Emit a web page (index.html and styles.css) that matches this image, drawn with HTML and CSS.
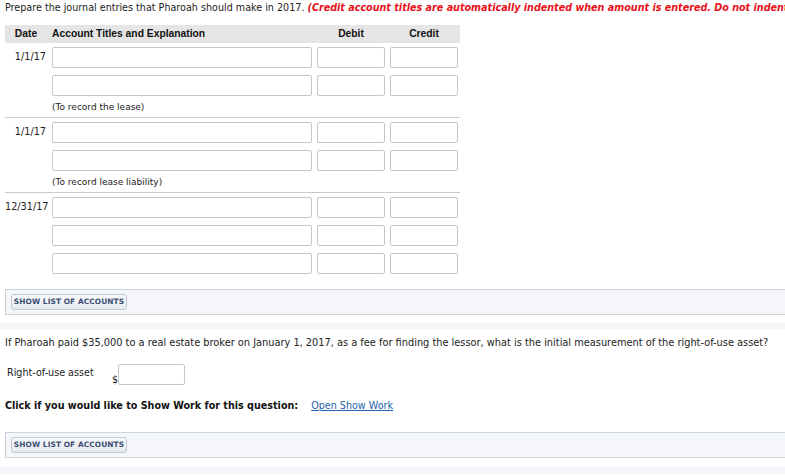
FILE: index.html
```html
<!DOCTYPE html>
<html>
<head>
<meta charset="utf-8">
<link rel="stylesheet" href="styles.css">
</head>
<body>
<div class="page">
  <p class="prompt">Prepare the journal entries that Pharoah should make in 2017. <span class="warn">(Credit account titles are automatically indented when amount is entered. Do not indent manually.)</span></p>

  <div class="journal">
    <div class="jhead">
      <div class="hc center">Date</div>
      <div class="hc">Account Titles and Explanation</div>
      <div class="hc center">Debit</div>
      <div class="hc center">Credit</div>
    </div>

    <div class="entry sep">
      <div class="row"><div class="date">1/1/17</div><input class="inp acct"><input class="inp amt"><input class="inp amt"></div>
      <div class="row"><div class="date"></div><input class="inp acct"><input class="inp amt"><input class="inp amt"></div>
      <div class="note">(To record the lease)</div>
    </div>

    <div class="entry sep">
      <div class="row"><div class="date">1/1/17</div><input class="inp acct"><input class="inp amt"><input class="inp amt"></div>
      <div class="row"><div class="date"></div><input class="inp acct"><input class="inp amt"><input class="inp amt"></div>
      <div class="note">(To record lease liability)</div>
    </div>

    <div class="entry">
      <div class="row"><div class="date">12/31/17</div><input class="inp acct"><input class="inp amt"><input class="inp amt"></div>
      <div class="row"><div class="date"></div><input class="inp acct"><input class="inp amt"><input class="inp amt"></div>
      <div class="row"><div class="date"></div><input class="inp acct"><input class="inp amt"><input class="inp amt"></div>
    </div>
  </div>

  <div class="acctbox first"><button class="btn">SHOW LIST OF ACCOUNTS</button></div>

  <div class="strip"></div>

  <p class="question">If Pharoah paid $35,000 to a real estate broker on January 1, 2017, as a fee for finding the lessor, what is the initial measurement of the right-of-use asset?</p>

  <div class="answer">
    <span class="label">Right-of-use asset</span>
    <span class="dollar">$</span><input class="inp ans">
  </div>

  <p class="showwork"><b>Click if you would like to Show Work for this question:</b><a class="link" href="#">Open Show Work</a></p>

  <div class="acctbox"><button class="btn">SHOW LIST OF ACCOUNTS</button></div>

  <div class="strip bottom"></div>
</div>
</body>
</html>
```

FILE: styles.css
```css
html, body {
  margin: 0;
  padding: 0;
  background: #fff;
  overflow: hidden;
}
.page {
  width: 785px;
  height: 475px;
  overflow: hidden;
  font-family: "DejaVu Sans", Verdana, sans-serif;
  font-size: 10px;
  color: #222;
  white-space: nowrap;
}
.prompt {
  margin: 0;
  padding: 1px 5px 0 5px;
  height: 24px;
  line-height: 14px;
  font-size: 9.6px;
}
.warn {
  color: #e8101a;
  font-weight: bold;
  font-style: italic;
}
.journal {
  margin-left: 5px;
  width: 455px;
  font-size: 10px;
}
.jhead, .row {
  display: grid;
  grid-template-columns: 42px 260px 68px 68px;
  column-gap: 5px;
}
.jhead {
  background: #e5e5e5;
  height: 18px;
  line-height: 18px;
  font-family: "Liberation Sans", Arial, sans-serif;
  font-weight: bold;
  font-size: 10.3px;
  color: #111;
}
.hc.center { text-align: center; }
.entry {
  padding-top: 4px;
}
.entry.sep {
  border-bottom: 1px solid #c9c9c9;
}
.row {
  height: 21px;
  margin-bottom: 7px;
}
.entry .row:last-of-type { margin-bottom: 0; }
.entry.sep .row:nth-child(2) { margin-bottom: 0; }
.date {
  text-align: right;
  padding-top: 4px;
  padding-right: 1px;
  font-size: 9.7px;
  color: #222;
}
.inp {
  box-sizing: border-box;
  height: 21px;
  margin: 0;
  padding: 0;
  border: 1px solid #c6c6c6;
  border-radius: 2px;
  background: #fff;
  font: inherit;
  outline: none;
}
.acct { width: 260px; }
.amt { width: 68px; }
.note {
  height: 21px;
  line-height: 23px;
  padding-left: 47px;
  font-size: 9px;
}
.acctbox {
  box-sizing: border-box;
  width: 820px;
  margin-left: 5px;
  height: 26px;
  padding: 4px 5px;
  background: #f4f6f9;
  border: 1px solid #cdd3dd;
}
.acctbox.first { margin-top: 15px; }
.btn {
  display: block;
  box-sizing: border-box;
  height: 16px;
  width: 116px;
  margin: 0;
  padding: 0;
  border: 1px solid #c3cad5;
  border-radius: 3px;
  background: linear-gradient(#f7f8fa, #e6eaf0);
  font-family: "DejaVu Sans", Verdana, sans-serif;
  font-size: 7.4px;
  font-weight: bold;
  color: #3b4f72;
  letter-spacing: 0.1px;
  line-height: 14px;
}
.strip {
  margin-top: 8px;
  height: 6px;
  background: #f4f6f9;
}
.strip.bottom { height: 8px; }
.question {
  margin: 0;
  padding: 7px 5px 0 5px;
  height: 27px;
  line-height: 14px;
  font-size: 9.8px;
}
.answer {
  display: flex;
  align-items: flex-start;
  height: 21px;
  padding-left: 7px;
}
.label {
  width: 105px;
  padding-top: 4px;
  font-size: 9.6px;
}
.dollar {
  padding-top: 11px;
  font-size: 9.6px;
}
.ans { width: 67px; margin-top: 1px; }
.showwork {
  margin: 0;
  padding: 15px 5px 0 5px;
  height: 33px;
  line-height: 14px;
  font-size: 9.6px;
  color: #111;
}
.link {
  margin-left: 13px;
  color: #2563a8;
  text-decoration: underline;
  font-size: 9.6px;
}
```
